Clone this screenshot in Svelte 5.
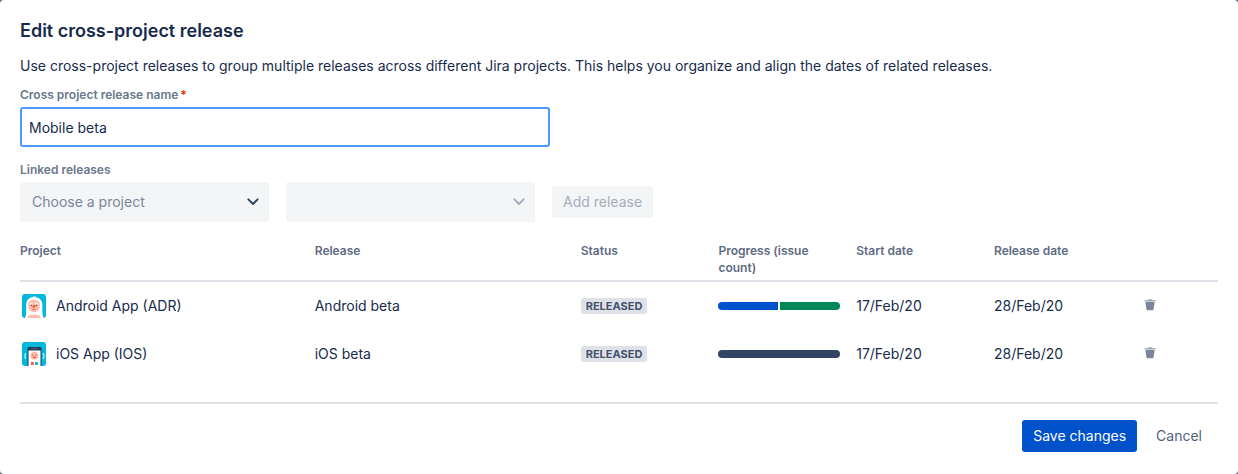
<script lang="ts">
  type Release = {
    key: string;
    project: string;
    avatar: 'android' | 'ios';
    release: string;
    status: string;
    progress: { color: string; count: number }[];
    start: string;
    end: string;
  };

  let name = $state('Mobile beta');
  let project = $state('');
  let linkedRelease = $state('');

  let releases = $state<Release[]>([
    {
      key: 'ADR',
      project: 'Android App',
      avatar: 'android',
      release: 'Android beta',
      status: 'Released',
      progress: [
        { color: '#0052cc', count: 1 },
        { color: '#00875a', count: 1 }
      ],
      start: '17/Feb/20',
      end: '28/Feb/20'
    },
    {
      key: 'IOS',
      project: 'iOS App',
      avatar: 'ios',
      release: 'iOS beta',
      status: 'Released',
      progress: [{ color: '#344563', count: 1 }],
      start: '17/Feb/20',
      end: '28/Feb/20'
    }
  ]);

  function removeRelease(key: string) {
    releases = releases.filter((item) => item.key !== key);
  }
</script>

{#snippet chevron()}
  <svg class="chevron" width="14" height="10" viewBox="0 0 14 10" aria-hidden="true">
    <path d="M2.4 2.4 7 7l4.6-4.6" fill="none" stroke="currentColor" stroke-width="2" stroke-linecap="round" stroke-linejoin="round" />
  </svg>
{/snippet}

<main class="dialog">
  <h1>Edit cross-project release</h1>
  <p class="intro">
    Use cross-project releases to group multiple releases across different Jira projects. This helps you organize and
    align the dates of related releases.
  </p>

  <form onsubmit={(e) => e.preventDefault()}>
    <label class="label" for="release-name">Cross project release name<span class="required">*</span></label>
    <input id="release-name" class="text-field" type="text" bind:value={name} required />

    <label class="label linked" for="project">Linked releases</label>
    <div class="picker">
      <div class="select">
        <select id="project" bind:value={project}>
          <option value="">Choose a project</option>
          <option value="ADR">Android App (ADR)</option>
          <option value="IOS">iOS App (IOS)</option>
        </select>
        {@render chevron()}
      </div>
      <div class="select disabled">
        <select aria-label="Release" bind:value={linkedRelease} disabled={!project}>
          <option value=""></option>
        </select>
        {@render chevron()}
      </div>
      <button class="button add" type="button" disabled={!linkedRelease}>Add release</button>
    </div>

    <table>
      <thead>
        <tr>
          <th class="col-project">Project</th>
          <th class="col-release">Release</th>
          <th class="col-data">Status</th>
          <th class="col-data">Progress (issue count)</th>
          <th class="col-data">Start date</th>
          <th class="col-end">Release date</th>
          <th></th>
        </tr>
      </thead>
      <tbody>
        {#each releases as item (item.key)}
          <tr>
            <td>
              <div class="project">
                {#if item.avatar === 'android'}
                  <svg class="avatar" viewBox="0 0 24 24" aria-hidden="true">
                    <rect width="24" height="24" fill="#00b8d9" />
                    <path d="M3 24c1-2 1.2-4 1.200-8V11C4.200 6.500 7 3.500 11 3.100l.4-1.100 1 .9 1-.8.4 1.200c4 .6 6.600 3.500 6.600 7.700v5c0 4 .3 6 1.300 8z" fill="#fff" />
                    <path d="M6.300 10c0-2.600 2.300-4 5.700-4s5.700 1.400 5.700 4v2.500c0 3.200-2.400 5.500-5.700 5.500s-5.700-2.300-5.700-5.500z" fill="#ffbdad" />
                    <path d="M8 9.800h3M13 9.800h3" stroke="#fff" />
                    <circle cx="9.500" cy="11.500" r=".8" fill="#5e4b5b" />
                    <circle cx="14.500" cy="11.500" r=".8" fill="#5e4b5b" />
                    <circle cx="12" cy="12.500" r="1.400" fill="#ff5630" />
                    <path d="M10 15.300q2 .8 4 0" fill="none" stroke="#de6b58" stroke-width=".8" />
                    <path d="M5.600 24c0-2 1.400-3.300 3.200-3.300h6.600c1.800 0 3.200 1.300 3.200 3.300z" fill="#ffbdad" />
                  </svg>
                {:else}
                  <svg class="avatar" viewBox="0 0 24 24" aria-hidden="true">
                    <rect width="24" height="24" fill="#00b8d9" />
                    <path d="M3.800 11q-2 3 0 6M21 11q2 3 0 6" fill="none" stroke="#b3f5ff" stroke-width="1.200" />
                    <path d="M5.500 24V6.500q0-1.500 1.500-1.500h11q1.500 0 1.500 1.500V24z" fill="#253858" />
                    <path d="M9.500 6.800h6" stroke="#5e6c84" stroke-width=".8" />
                    <path d="M6.500 8.500h12V24h-12z" fill="#fff" />
                    <circle cx="12.400" cy="13.800" r="4" fill="#ffbdad" />
                    <circle cx="10.900" cy="13" r=".6" fill="#5e4b5b" />
                    <circle cx="13.900" cy="13" r=".6" fill="#5e4b5b" />
                    <path d="M10.900 15q1.500 1.200 3 0" fill="none" stroke="#ff5630" stroke-width="1.100" />
                    <path d="M9 20h2.800v3H9z" fill="#ff5630" />
                    <path d="M13 20h2.800v3H13z" fill="#00b8d9" />
                  </svg>
                {/if}
                <span>{item.project} ({item.key})</span>
              </div>
            </td>
            <td>{item.release}</td>
            <td><span class="lozenge">{item.status}</span></td>
            <td>
              <div class="progress">
                {#each item.progress as part}
                  <span style="flex-grow: {part.count}; background: {part.color}"></span>
                {/each}
              </div>
            </td>
            <td>{item.start}</td>
            <td>{item.end}</td>
            <td>
              <button class="remove" type="button" aria-label="Remove {item.release}" onclick={() => removeRelease(item.key)}>
                <svg width="12" height="14" viewBox="0 0 12 14" aria-hidden="true">
                  <path d="M.5 1.200H4l.5-.9h3l.5.9h3.500v1.300H.5z" fill="#97a0af" />
                  <path d="M1.400 3h9.200l-1 7.300q-.1.900-1 .9H3.400q-.9 0-1-.9z" fill="#7a869a" />
                </svg>
              </button>
            </td>
          </tr>
        {/each}
      </tbody>
    </table>

    <footer class="actions">
      <button class="button primary" type="submit">Save changes</button>
      <button class="button subtle" type="button">Cancel</button>
    </footer>
  </form>
</main>

<style>
  :global(body) {
    background: #5e6c84;
  }

  .dialog {
    box-sizing: border-box;
    padding: 19px 20px 22px;
    border-radius: 4px;
    background: #fff;
    color: #172b4d;
    font-family: Inter, 'Liberation Sans', sans-serif;
    font-size: 14px;
    line-height: 20px;
  }

  h1 {
    margin: 0;
    font-size: 18px;
    font-weight: 600;
    line-height: 24px;
  }

  .intro {
    margin: 13px 0 11px;
  }

  .label {
    display: block;
    color: #6b778c;
    font-size: 12px;
    font-weight: 600;
    line-height: 16px;
  }

  .linked {
    margin-top: 15px;
  }

  .required {
    padding-left: 2px;
    color: #de350b;
  }

  input,
  select,
  button {
    box-sizing: border-box;
    margin: 0;
    border: none;
    border-radius: 3px;
    font: inherit;
  }

  .text-field {
    display: block;
    width: 100%;
    max-width: 530px;
    height: 40px;
    margin-top: 4px;
    padding: 0 7px;
    border: 2px solid #4c9aff;
    outline: none;
    background: #fff;
    color: #172b4d;
  }

  .picker {
    display: flex;
    align-items: center;
    gap: 17px;
    margin-top: 4px;
  }

  .select {
    display: grid;
    flex: 0 1 249px;
    align-items: center;
    color: #344563;
  }

  .select.disabled {
    color: #a5adba;
  }

  .select select,
  .chevron {
    grid-area: 1 / 1;
  }

  .select select {
    width: 100%;
    height: 40px;
    padding: 0 32px 0 12px;
    appearance: none;
    background: #f4f5f7;
    color: #7a869a;
    opacity: 1;
  }

  .chevron {
    justify-self: end;
    margin-right: 9px;
    pointer-events: none;
  }

  .button {
    height: 32px;
    padding: 0 11px;
    cursor: pointer;
  }

  .add {
    background: #f4f5f7;
    color: #a5adba;
  }

  .add:disabled {
    cursor: not-allowed;
  }

  .primary {
    background: #0052cc;
    color: #fff;
  }

  .subtle {
    background: none;
    color: #505f79;
  }

  table {
    width: 100%;
    margin-top: 20px;
    border-collapse: separate;
    border-spacing: 0;
    table-layout: fixed;
  }

  th {
    box-sizing: border-box;
    padding: 0 16px 4px 0;
    border-bottom: 2px solid #dfe1e6;
    color: #5e6c84;
    font-size: 12px;
    font-weight: 600;
    line-height: 17px;
    text-align: left;
    vertical-align: top;
  }

  .col-project {
    width: 24.6%;
  }

  .col-release {
    width: 22.2%;
  }

  .col-data {
    width: 11.5%;
  }

  .col-end {
    width: 12.5%;
  }

  td {
    height: 48px;
    padding: 0 16px 0 0;
    vertical-align: middle;
  }

  .project {
    display: flex;
    align-items: center;
    gap: 10px;
    padding-left: 2px;
  }

  .avatar {
    width: 24px;
    height: 24px;
    border-radius: 3px;
  }

  .lozenge {
    display: block;
    width: fit-content;
    padding: 0 5px;
    border-radius: 3px;
    background: #dfe1e6;
    color: #42526e;
    font-size: 11px;
    font-weight: 700;
    line-height: 16px;
    text-transform: uppercase;
  }

  .progress {
    display: flex;
    gap: 2px;
    height: 8px;
    overflow: hidden;
    border-radius: 4px;
  }

  .remove {
    display: flex;
    padding: 0;
    background: none;
    cursor: pointer;
  }

  .actions {
    display: flex;
    justify-content: flex-end;
    gap: 8px;
    margin-top: 24px;
    padding: 16px 5px 0 0;
    border-top: 2px solid #dfe1e6;
  }
</style>
